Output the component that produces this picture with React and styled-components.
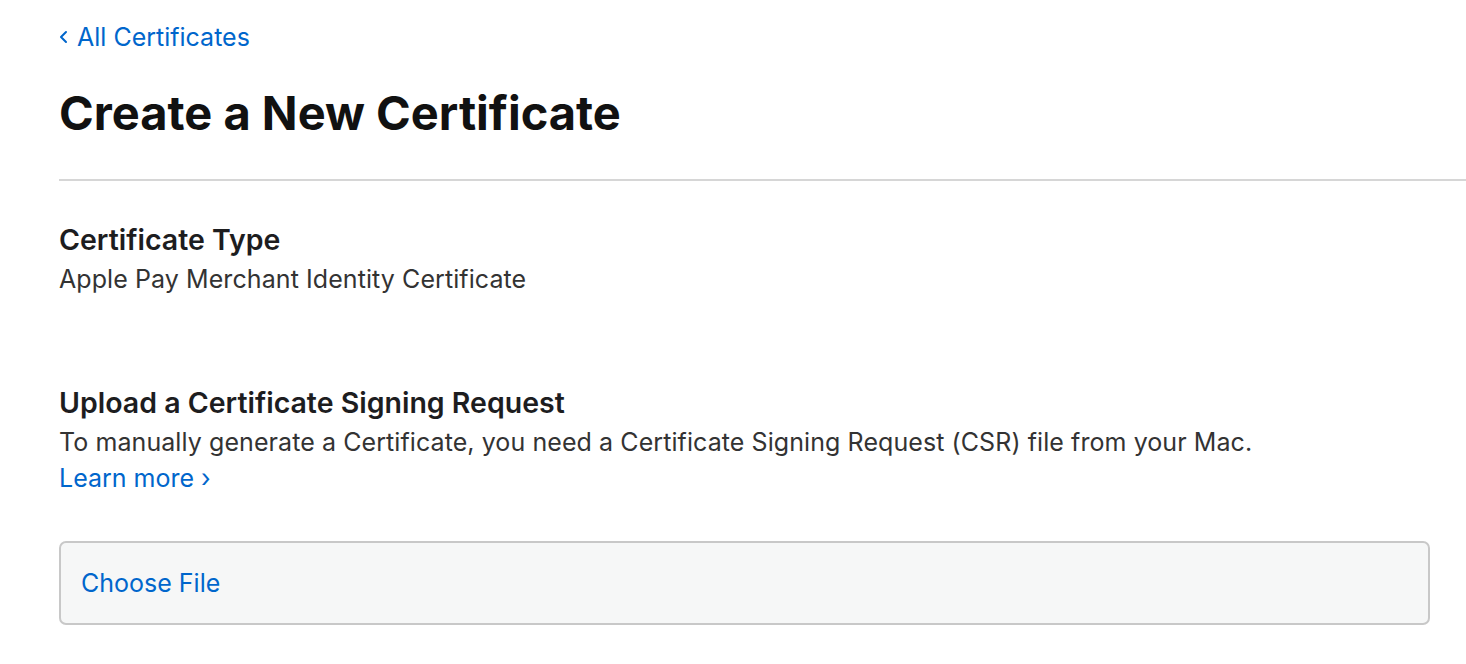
import React from 'react'
import styled, { createGlobalStyle } from 'styled-components'

const GlobalStyle = createGlobalStyle`
  html, body {
    margin: 0;
    padding: 0;
    background: #fff;
    font-family: Inter, "Noto Sans", "Liberation Sans", sans-serif;
    -webkit-font-smoothing: antialiased;
  }
`

const Page = styled.div`
  width: 1466px;
  height: 664px;
  overflow: hidden;
  padding-left: 59px;
  box-sizing: border-box;
`

const BackLink = styled.a`
  display: inline-flex;
  align-items: center;
  gap: 9px;
  margin-top: 22px;
  color: #0066cc;
  font-size: 25px;
  line-height: 30px;
  text-decoration: none;
`

const Title = styled.h1`
  margin: 33px 0 0;
  font-size: 47px;
  font-weight: 700;
  line-height: 56px;
  color: #111;
`

const Divider = styled.hr`
  margin: 38px 0 0;
  border: 0;
  height: 2px;
  background: #d6d6d6;
`

const Section = styled.section`
  margin-top: ${p => p.$top}px;
`

const SectionTitle = styled.h2`
  margin: 0;
  font-size: 28.5px;
  font-weight: 600;
  line-height: 36px;
  color: #1d1d1f;
`

const Text = styled.p`
  margin: 3px 0 0;
  font-size: 25px;
  line-height: 36px;
  color: #333;
  letter-spacing: 0.08px;
`

const Link = styled.a`
  display: inline-block;
  color: #0066cc;
  font-size: 25px;
  line-height: 36px;
  text-decoration: none;
`

const FileBox = styled.div`
  margin: 45px 36px 0 0;
  height: 80px;
  border: 2px solid #c8c8c8;
  border-radius: 7px;
  background: #f6f7f7;
  display: flex;
  align-items: center;
  padding-left: 20px;
`

const FileButton = styled.span`
  color: #0066cc;
  font-size: 25px;
`

const Chevron = ({ dir = 'left' }) => (
  <svg width="9" height="14" viewBox="0 0 9 14" fill="none">
    <path
      d={dir === 'left' ? 'M7 2 L2 7 L7 12' : 'M2 2 L7 7 L2 12'}
      stroke="#0066cc"
      strokeWidth="2"
      strokeLinecap="round"
      strokeLinejoin="round"
    />
  </svg>
)

export default function App() {
  return (
    <Page>
      <GlobalStyle />
      <BackLink href="#">
        <Chevron dir="left" />
        All Certificates
      </BackLink>
      <Title>Create a New Certificate</Title>
      <Divider />
      <Section $top={41}>
        <SectionTitle>Certificate Type</SectionTitle>
        <Text>Apple Pay Merchant Identity Certificate</Text>
      </Section>
      <Section $top={88}>
        <SectionTitle>Upload a Certificate Signing Request</SectionTitle>
        <Text>To manually generate a Certificate, you need a Certificate Signing Request (CSR) file from your Mac.</Text>
        <Link href="#">Learn more ›</Link>
      </Section>
      <FileBox>
        <FileButton>Choose File</FileButton>
      </FileBox>
    </Page>
  )
}
